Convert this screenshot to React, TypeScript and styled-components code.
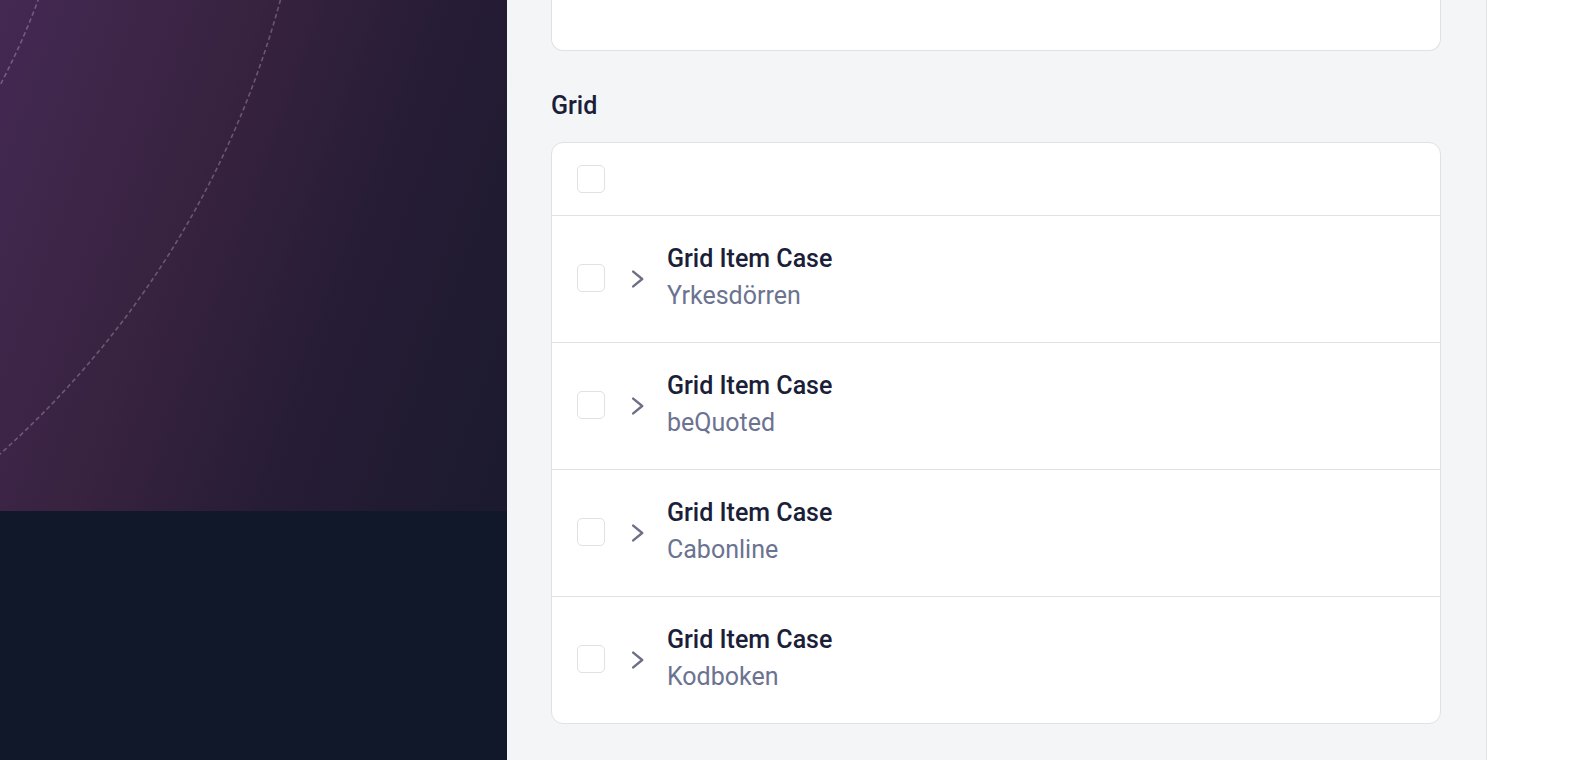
import React from "react";
import styled, { createGlobalStyle } from "styled-components";

type TCase = {
  title: string;
  company: string;
};

const cases: TCase[] = [
  { title: "Grid Item Case", company: "Yrkesdörren" },
  { title: "Grid Item Case", company: "beQuoted" },
  { title: "Grid Item Case", company: "Cabonline" },
  { title: "Grid Item Case", company: "Kodboken" },
];

const GlobalStyle = createGlobalStyle`
  html, body {
    margin: 0;
    padding: 0;
    height: 100%;
    font-family: Roboto, "Liberation Sans", Arial, sans-serif;
  }

  #root {
    height: 100%;
  }

  * {
    box-sizing: border-box;
  }
`;

const Chevron = () => (
  <svg width="14" height="18" viewBox="0 0 14 18" fill="none">
    <polyline
      points="2.2,1.6 11.2,9 2.2,16.4"
      stroke="#6b7088"
      strokeWidth="2.4"
      strokeLinecap="round"
      strokeLinejoin="round"
    />
  </svg>
);

const Rings = () => (
  <svg width="507" height="511" viewBox="0 0 507 511" fill="none">
    <circle
      cx="-624"
      cy="-245"
      r="706"
      stroke="rgba(255,255,255,0.25)"
      strokeWidth="1.6"
      strokeDasharray="4.5 3"
    />
    <circle
      cx="-624"
      cy="-245"
      r="937"
      stroke="rgba(255,255,255,0.25)"
      strokeWidth="1.6"
      strokeDasharray="4.5 3"
    />
  </svg>
);

const App = (): JSX.Element => {
  return (
    <Layout>
      <GlobalStyle />

      {/* left brand panel */}
      <Aside>
        <Hero>
          <Rings />
        </Hero>
        <AsideBottom />
      </Aside>

      {/* main content */}
      <Main>
        <PrevCard />

        <Heading>Grid</Heading>

        <Card>
          <HeaderRow>
            <Checkbox type="button" aria-label="select all" />
          </HeaderRow>

          {cases.map((item) => (
            <Row key={item.company}>
              <Checkbox type="button" aria-label={item.company} />
              <Toggle>
                <Chevron />
              </Toggle>
              <Texts>
                <Title>{item.title}</Title>
                <Company>{item.company}</Company>
              </Texts>
            </Row>
          ))}
        </Card>
      </Main>

      <Side />
    </Layout>
  );
};

const Layout = styled.div`
  display: flex;
  height: 760px;
  overflow: hidden;
`;

const Aside = styled.aside`
  width: 507px;
  flex-shrink: 0;
  display: flex;
  flex-direction: column;
  background: #101828;
`;

const Hero = styled.div`
  height: 511px;
  overflow: hidden;
  background: linear-gradient(
    110deg,
    #442953 0%,
    #37223f 38%,
    #261c35 66%,
    #1b1a2e 100%
  );

  svg {
    display: block;
  }
`;

const AsideBottom = styled.div`
  flex: 1;
  background: #10182a;
`;

const Main = styled.main`
  width: 980px;
  flex-shrink: 0;
  background: #f4f5f7;
  border-right: 1px solid #e1e3e8;
  padding: 0 45px 0 44px;
`;

const PrevCard = styled.div`
  height: 51px;
  background: #ffffff;
  border: 1px solid #dfe1e6;
  border-top: none;
  border-radius: 0 0 12px 12px;
`;

const Heading = styled.h2`
  margin: 39px 0 20px;
  font-size: 25px;
  line-height: 32px;
  font-weight: 500;
  color: #1a2038;
`;

const Card = styled.div`
  background: #ffffff;
  border: 1px solid #dfe1e6;
  border-radius: 12px;
`;

const HeaderRow = styled.div`
  height: 72px;
  display: flex;
  align-items: center;
  padding-left: 25px;
`;

const Row = styled.div`
  display: flex;
  align-items: center;
  padding: 25px 25px 28px;
  border-top: 1px solid #dfe1e6;
`;

const Checkbox = styled.button`
  width: 28px;
  height: 28px;
  padding: 0;
  flex-shrink: 0;
  background: #ffffff;
  border: 1px solid #dfe1e6;
  border-radius: 5px;
`;

const Toggle = styled.span`
  display: flex;
  margin: 2px 22px 0 26px;
`;

const Texts = styled.div`
  display: flex;
  flex-direction: column;
`;

const Title = styled.span`
  font-size: 25px;
  line-height: 36px;
  font-weight: 500;
  color: #1a2038;
`;

const Company = styled.span`
  font-size: 25px;
  line-height: 37px;
  font-weight: 400;
  color: #6b7390;
`;

const Side = styled.div`
  flex: 1;
  background: #ffffff;
`;

export default App;
